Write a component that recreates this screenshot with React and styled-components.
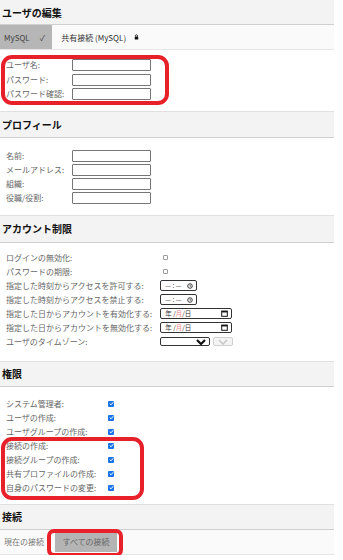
import React from 'react'
import styled, { createGlobalStyle } from 'styled-components'

const Global = createGlobalStyle`
body{
  margin:0;
  background:#fff;
  font-family: "Noto Sans CJK JP", "Noto Sans", sans-serif;
}
`

const Page = styled.div`
position:relative;
width:334px;
`

const Header = styled.div`
height:${props => props.h || 25}px;
box-sizing:border-box;
display:flex;
align-items:center;
padding-left:2px;
background:#f3f3f3;
border-top:${props => props.first ? 'none' : '1px solid #e0e0e0'};
border-bottom:1px solid #cfcfcf;
font-size:10px;
font-weight:bold;
color:#111;
`

const Tabs = styled.div`
display:flex;
align-items:stretch;
height:25px;
box-sizing:border-box;
background:#fafafa;
border-bottom:1px solid #e6e6e6;
font-size:8px;
`

const Tab = styled.div`
display:flex;
align-items:center;
gap:${props => props.active ? '10px' : '8px'};
padding:0 ${props => props.active ? '7px' : '9px'} 0 ${props => props.active ? '4px' : '9px'};
background:${props => props.active ? '#b6b6b6' : 'transparent'};
color:${props => props.active ? '#444' : '#333'};
`

const Body = styled.div`
display:grid;
grid-template-columns:max-content max-content;
column-gap:${props => props.gap || 8}px;
grid-auto-rows:${props => props.row || 14}px;
align-items:center;
padding:${props => props.pad || '8px 0 8px 6px'};
`

const Label = styled.div`
font-size:8px;
color:${props => props.tone || '#666'};
white-space:nowrap;
line-height:1;
`

const Cell = styled.div`
display:flex;
align-items:center;
height:100%;
`

const TextInput = styled.div`
width:79px;
height:12px;
box-sizing:border-box;
border:1px solid #767676;
border-radius:1px;
background:#fff;
`

const Box = styled.span`
display:inline-flex;
align-items:center;
justify-content:center;
width:${props => props.checked ? 6 : 5}px;
height:${props => props.checked ? 6 : 5}px;
margin-left:${props => props.shift || 0}px;
box-sizing:border-box;
border:${props => props.checked ? 'none' : '1px solid #9a9a9a'};
border-radius:1px;
background:${props => props.checked ? '#1a73e8' : '#fff'};
`

const FakeField = styled.div`
display:flex;
align-items:center;
justify-content:space-between;
width:${props => props.w}px;
height:11px;
box-sizing:border-box;
padding:0 3px 0 4px;
border:1px solid #333;
border-radius:2px;
background:#fff;
font-size:6.5px;
color:#333;
line-height:1;
`

const Dim = styled.span`
color:#f08080;
`

const Row = styled.div`
display:flex;
align-items:center;
gap:3px;
`

const SelectBox = styled.div`
display:flex;
align-items:center;
justify-content:flex-end;
width:50px;
height:9px;
box-sizing:border-box;
padding-right:3px;
border:1px solid #333;
border-radius:2px;
background:#fff;
`

const GhostButton = styled.div`
display:flex;
align-items:center;
justify-content:center;
width:20px;
height:9px;
box-sizing:border-box;
border:1px solid #d0d0d0;
border-radius:2px;
background:#f4f4f4;
`

const ConnRow = styled.div`
display:flex;
align-items:center;
gap:11px;
height:25px;
box-sizing:border-box;
padding-left:4px;
background:#fafafa;
border-bottom:1px solid #e6e6e6;
`

const GreyButton = styled.div`
display:flex;
align-items:center;
justify-content:center;
width:62px;
height:20px;
background:#b4b4b4;
font-size:8px;
color:#666;
`

const Mark = styled.div`
position:absolute;
left:${props => props.x}px;
top:${props => props.y}px;
width:${props => props.w}px;
height:${props => props.h}px;
box-sizing:border-box;
border:4px solid #e8202a;
border-radius:${props => props.r || 11}px;
pointer-events:none;
`

const Check = () => (
  <Box checked>
    <svg width="5" height="5" viewBox="0 0 10 10">
      <path d="M1.5 5.2 L4 7.6 L8.6 2.4" fill="none" stroke="#fff" strokeWidth="2" />
    </svg>
  </Box>
)

const Chevron = ({ color, sw }) => (
  <svg width="10" height="6" viewBox="0 0 10 6">
    <path d="M1 1 L5 5 L9 1" fill="none" stroke={color} strokeWidth={sw} />
  </svg>
)

const Clock = () => (
  <svg width="6" height="6" viewBox="0 0 10 10">
    <circle cx="5" cy="5" r="3.8" fill="none" stroke="#333" strokeWidth="1.6" />
    <path d="M5 3 V5.3 H6.6" fill="none" stroke="#333" strokeWidth="1.2" />
  </svg>
)

const Calendar = () => (
  <svg width="7" height="7" viewBox="0 0 10 10">
    <rect x="1" y="1.5" width="8" height="7.5" fill="none" stroke="#111" strokeWidth="1.4" />
    <rect x="1" y="1.5" width="8" height="2" fill="#111" />
  </svg>
)

const TimeField = () => (
  <FakeField w={37}>
    <span>— : —</span>
    <Clock />
  </FakeField>
)

const DateField = () => (
  <FakeField w={72}>
    <span>年 /<Dim>月</Dim>/日</span>
    <Calendar />
  </FakeField>
)

const App = () => {
  const perms = ['システム管理者:', 'ユーザの作成:', 'ユーザグループの作成:', '接続の作成:', '接続グループの作成:', '共有プロファイルの作成:', '自身のパスワードの変更:']
  return (
    <Page>
      <Global />
      <Header first h={25}>ユーザの編集</Header>
      <Tabs>
        <Tab active>MySQL <span>✓</span></Tab>
        <Tab>
          共有接続 (MySQL)
          <svg width="5" height="6" viewBox="0 0 10 12">
            <path d="M3 5 V3.5 a2 2 0 0 1 4 0 V5" fill="none" stroke="#111" strokeWidth="1.6" />
            <rect x="1.5" y="5" width="7" height="6" rx="1" fill="#111" />
          </svg>
        </Tab>
      </Tabs>
      <Body row={14.5} pad="8px 0 9px 6px">
        <Label>ユーザ名:</Label><TextInput />
        <Label>パスワード:</Label><TextInput />
        <Label>パスワード確認:</Label><TextInput />
      </Body>

      <Header h={27}>プロフィール</Header>
      <Body pad="11px 0 10px 6px">
        <Label>名前:</Label><TextInput />
        <Label>メールアドレス:</Label><TextInput />
        <Label>組織:</Label><TextInput />
        <Label>役職/役割:</Label><TextInput />
      </Body>

      <Header h={28}>アカウント制限</Header>
      <Body pad="8px 0 12px 6px">
        <Label>ログインの無効化:</Label><Cell><Box shift={3} /></Cell>
        <Label>パスワードの期限:</Label><Cell><Box shift={3} /></Cell>
        <Label>指定した時刻からアクセスを許可する:</Label><TimeField />
        <Label>指定した時刻からアクセスを禁止する:</Label><TimeField />
        <Label>指定した日からアカウントを有効化する:</Label><DateField />
        <Label>指定した日からアカウントを無効化する:</Label><DateField />
        <Label>ユーザのタイムゾーン:</Label>
        <Row>
          <SelectBox><Chevron color="#111" sw={2.2} /></SelectBox>
          <GhostButton><Chevron color="#c8c8c8" sw={1.6} /></GhostButton>
        </Row>
      </Body>

      <Header h={26}>権限</Header>
      <Body gap={12} pad="10px 0 9px 6px">
        {perms.map(p => (
          <React.Fragment key={p}>
            <Label>{p}</Label><Cell><Check /></Cell>
          </React.Fragment>
        ))}
      </Body>

      <Header h={26}>接続</Header>
      <ConnRow>
        <Label tone="#777">現在の接続</Label>
        <GreyButton>すべての接続</GreyButton>
      </ConnRow>

      <Mark x={1} y={55} w={168} h={50} />
      <Mark x={1} y={437} w={143} h={63} />
      <Mark x={47} y={529} w={76} h={28} r={7} />
    </Page>
  )
}

export default App
